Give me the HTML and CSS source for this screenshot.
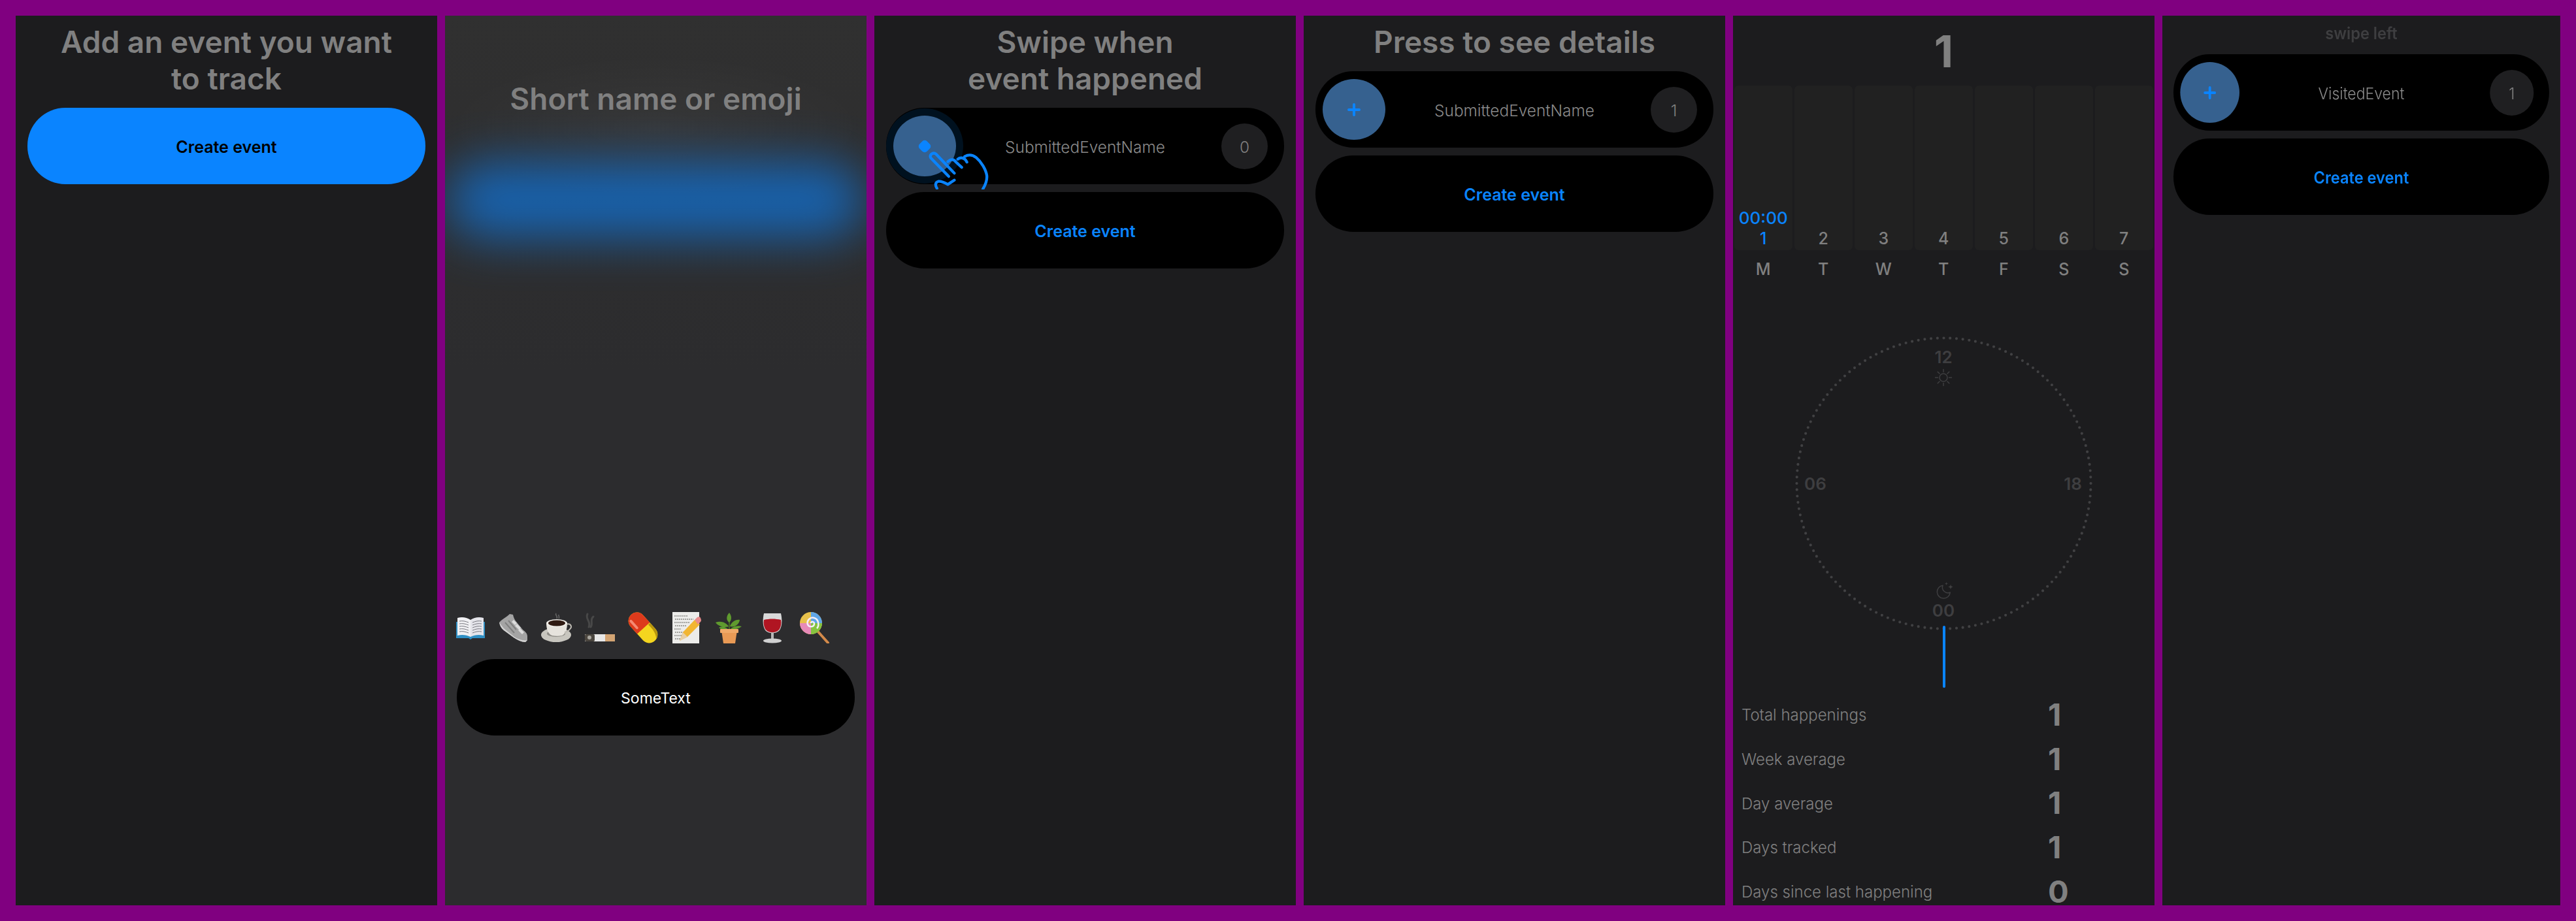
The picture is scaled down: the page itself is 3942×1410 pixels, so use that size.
FILE: index.html
```html
<!DOCTYPE html>
<html>
  <head>
    <meta charset="UTF-8">
    <title>Onboarding screens</title>
    <link rel="stylesheet" href="styles.css">
  </head>
  <body>
    <main class="board">

      <section class="screen">
        <h1 class="title">Add an event you want<br>to track</h1>
        <div class="pill pill-primary">Create event</div>
      </section>

      <section class="screen screen-name">
        <div class="glow"></div>
        <h1 class="title">Short name or emoji</h1>
        <div class="emoji-row">
          <svg class="emoji" viewBox="0 0 48 48">
            <path d="M2 15h44v25H27l-3 2-3-2H2z" fill="#2f8fc4"/>
            <path d="M4 9c7-2 14-1 20 3v26c-6-3-13-4-20-2z" fill="#f1f1f4"/>
            <path d="M44 9c-7-2-14-1-20 3v26c6-3 13-4 20-2z" fill="#e4e4ea"/>
            <path d="M7 14c5-1 9 0 14 2M7 18c5-1 9 0 14 2M7 22c5-1 9 0 14 2M7 26c5-1 9 0 14 2M7 30c5-1 9 0 14 2M41 14c-5-1-9 0-14 2M41 18c-5-1-9 0-14 2M41 22c-5-1-9 0-14 2M41 26c-5-1-9 0-14 2M41 30c-5-1-9 0-14 2" fill="none" stroke="#77777f" stroke-width="1"/>
          </svg>
          <svg class="emoji" viewBox="0 0 48 48">
            <path d="M2 16C6 11 13 8 18 3l5 1c1 5 3 9 6 12l9 11c4 3 7 6 7 10v6l-3 3C36 46 30 43 24 39L9 28C5 25 3 21 2 16z" fill="#a4a4a4"/>
            <path d="M2 16c1 5 3 9 7 12l15 11c6 4 12 7 18 7l3-3c-6 1-14-1-20-5L9 25z" fill="#d2d2d2"/>
            <path d="M24 12l5 5-3 3-5-5zM29 18l6 6-3 3-6-6zM34 25l6 6-3 3-6-6z" fill="#dcdcdc"/>
            <path d="M11 16l14 16M16 13l12 14" stroke="#808080" stroke-width="2" fill="none"/>
          </svg>
          <svg class="emoji" viewBox="0 0 48 48">
            <path d="M23 2c-2 3 3 4 1 8M27 4c-1 2 2 3 0 6" fill="none" stroke="#666" stroke-width="1.5"/>
            <ellipse cx="23" cy="35" rx="23" ry="11" fill="#c8c6bf"/>
            <ellipse cx="23" cy="33" rx="14" ry="5" fill="#8e8c86"/>
            <path d="M8 17h32c0 10-3 17-8 19-5 1-10 1-15 0C11 34 8 26 8 17z" fill="#e6e3dd"/>
            <path d="M38 19c8-3 9 4 7 6-2 3-5 5-9 6" fill="none" stroke="#bdbab3" stroke-width="2"/>
            <ellipse cx="24" cy="17" rx="16" ry="6" fill="#f1efea"/>
            <ellipse cx="24" cy="17" rx="13" ry="4.5" fill="#2f1a12"/>
          </svg>
          <svg class="emoji" viewBox="0 0 48 48">
            <path d="M5 3c-4 8 6 11 2 20M14 7c-6 5 0 10-4 16" fill="none" stroke="#484848" stroke-width="3" stroke-linecap="round"/>
            <rect x="1" y="34" width="46" height="11" rx="1" fill="#e8e8e8"/>
            <rect x="32" y="34" width="15" height="11" rx="1" fill="#d3a473"/>
            <rect x="1" y="34" width="15" height="11" rx="2" fill="#4b463f"/>
            <circle cx="8" cy="39" r="3" fill="#a8a59e"/>
          </svg>
          <svg class="emoji" viewBox="0 0 48 48">
            <g transform="rotate(-42 24 24)">
              <rect x="11" y="-3" width="26" height="54" rx="13" fill="#f4d51f"/>
              <path d="M11 25V10a13 13 0 0 1 26 0v15z" fill="#dd3a1c"/>
              <rect x="15" y="2" width="4" height="18" rx="2" fill="#f58a72"/>
              <path d="M37 26v12a13 13 0 0 1-9 12c5-7 6-15 5-24z" fill="#b8960e"/>
            </g>
          </svg>
          <svg class="emoji" viewBox="0 0 48 48">
            <rect x="3" y="0" width="41" height="48" fill="#ececea"/>
            <path d="M6 6h20M7 11h28M6 16h24M7 21h18M6 26h10M7 31h14M6 36h12M7 41h9" stroke="#55554f" stroke-width="1" stroke-dasharray="2 1" fill="none"/>
            <path d="M14 44 19 31 37 12l8 7-19 19z" fill="#f2b632"/>
            <path d="M37 12l4-4c2-1 4-1 5 1l1 3c0 2-1 3-2 4l-3 3z" fill="#e98b8b"/>
            <path d="M14 44l5-13 7 7z" fill="#e8cfa6"/>
          </svg>
          <svg class="emoji" viewBox="0 0 48 48">
            <path d="M24 28V8" stroke="#4d7a25" stroke-width="1.5"/>
            <path d="M24 16C19 13 19 6 24 1c4 5 4 11 0 15zM23 22C18 24 8 23 3 16c8-3 16 0 20 6zM25 22c2-6 8-11 15-10-1 7-8 12-15 10zM23 27c-5 1-12 0-15-3 5-3 11-1 15 3zM25 27c5 1 13-1 18-5-6-2-14 0-18 5z" fill="#5f9a2e"/>
            <path d="M12 28h24l-3 20H15z" fill="#e99a55"/>
            <rect x="10" y="26" width="28" height="6" rx="1" fill="#f0a968"/>
          </svg>
          <svg class="emoji" viewBox="0 0 48 48">
            <path d="M11 2h26c2 9 2 18-1 24-2 4-6 6-12 6s-10-2-12-6c-3-6-3-15-1-24z" fill="#d9d9d9"/>
            <path d="M11 12c8-2 18-2 26 0 1 5 0 10-2 14-2 3-6 5-11 5s-9-2-11-5c-2-4-3-9-2-14z" fill="#b01522"/>
            <rect x="22" y="31" width="4" height="13" fill="#b8b8b8"/>
            <ellipse cx="24" cy="44" rx="14" ry="3.5" fill="#d0d0d0"/>
          </svg>
          <svg class="emoji" viewBox="0 0 48 48">
            <path d="M26 28l17 19" stroke="#d48a4a" stroke-width="4" stroke-linecap="round"/>
            <circle cx="17" cy="17" r="17" fill="#e7c14b"/>
            <path d="M17 0a17 17 0 0 1 17 17H17z" fill="#5fa6e8"/>
            <path d="M34 17a17 17 0 0 1-17 17V17z" fill="#86c440"/>
            <path d="M17 34A17 17 0 0 1 0 17h17z" fill="#e78ab8"/>
            <path d="M17 17c0-3 5-3 5 1 0 5-8 6-10 1-2-6 4-12 10-10 7 2 8 12 4 16" fill="none" stroke="#f4f0f6" stroke-width="2.5"/>
          </svg>
        </div>
        <div class="pill pill-input">SomeText</div>
      </section>

      <section class="screen">
        <h1 class="title">Swipe when<br>event happened</h1>
        <div class="pill-list">
          <div class="pill event-row">
            <div class="add-btn add-btn-pressed"><span class="press-dot"></span></div>
            <span class="event-name">SubmittedEventName</span>
            <span class="count">0</span>
            <svg class="hand" viewBox="200 200 300 190">
              <path d="M304 330 222 245c-10-14 10-30 24-18l84 88M250 385c-8-12-10-28 6-32 14-3 30 6 44 14l30-20M300 262c10-10 26-16 38 2l26 24M346 250c10-8 26-8 36 4l6 10M378 238c18-10 36-8 52 4 24 20 46 56 50 84 2 20-6 42-18 62" fill="none" stroke="#0a84ff" stroke-width="13" stroke-linecap="round" stroke-linejoin="round"/>
            </svg>
          </div>
          <div class="pill pill-create">Create event</div>
        </div>
      </section>

      <section class="screen">
        <h1 class="title">Press to see details</h1>
        <div class="pill-list">
          <div class="pill event-row">
            <div class="add-btn"><span class="plus"></span></div>
            <span class="event-name">SubmittedEventName</span>
            <span class="count">1</span>
          </div>
          <div class="pill pill-create">Create event</div>
        </div>
      </section>

      <section class="screen">
        <div class="big-count">1</div>
        <div class="week">
          <div class="day-bar"><span class="bar-time">00:00</span><span class="bar-num bar-active">1</span></div>
          <div class="day-bar"><span class="bar-num">2</span></div>
          <div class="day-bar"><span class="bar-num">3</span></div>
          <div class="day-bar"><span class="bar-num">4</span></div>
          <div class="day-bar"><span class="bar-num">5</span></div>
          <div class="day-bar"><span class="bar-num">6</span></div>
          <div class="day-bar"><span class="bar-num">7</span></div>
        </div>
        <div class="week week-days">
          <span>M</span><span>T</span><span>W</span><span>T</span><span>F</span><span>S</span><span>S</span>
        </div>
        <div class="clock">
          <svg class="clock-ring" viewBox="0 0 645 545">
            <ellipse cx="322.5" cy="230" rx="225" ry="222.5" pathLength="144" fill="none" stroke="#414143" stroke-width="4.2" stroke-linecap="round" stroke-dasharray="0 1"/>
          </svg>
          <span class="hour hour-12">12</span>
          <span class="hour hour-06">06</span>
          <span class="hour hour-18">18</span>
          <span class="hour hour-00">00</span>
          <svg class="sun" viewBox="0 0 28 28">
            <circle cx="14" cy="14" r="6" fill="none" stroke="#3e3e40" stroke-width="1.5"/>
            <path d="M14 1.5v4M14 22.5v4M1.5 14h4M22.5 14h4M5.2 5.2l2.8 2.8M20 20l2.8 2.8M5.2 22.800 8 20M20 8l2.8-2.8" stroke="#3e3e40" stroke-width="1.5" stroke-linecap="round"/>
          </svg>
          <svg class="moon" viewBox="0 0 28 26">
            <path d="M11 5.2A10 10 0 1 0 22.3 16 8.5 8.5 0 0 1 11 5.2Z" fill="none" stroke="#3e3e40" stroke-width="1.5" stroke-linejoin="round"/>
            <path d="M23 3.5c.4 2.6 1.4 3.6 4 4-2.6.4-3.6 1.4-4 4-.4-2.600-1.400-3.600-4-4 2.600-.4 3.600-1.400 4-4zM16.500 0c.3 1.700.9 2.300 2.600 2.600-1.700.3-2.300.9-2.600 2.600-.3-1.700-.9-2.300-2.600-2.600 1.700-.3 2.300-.9 2.600-2.600z" fill="#3e3e40"/>
          </svg>
          <span class="clock-hand"></span>
        </div>
        <div class="stats">
          <div class="stat"><span class="stat-label">Total happenings</span><span class="stat-value">1</span></div>
          <div class="stat"><span class="stat-label">Week average</span><span class="stat-value">1</span></div>
          <div class="stat"><span class="stat-label">Day average</span><span class="stat-value">1</span></div>
          <div class="stat"><span class="stat-label">Days tracked</span><span class="stat-value">1</span></div>
          <div class="stat"><span class="stat-label">Days since last happening</span><span class="stat-value">0</span></div>
        </div>
      </section>

      <section class="screen screen-narrow">
        <h2 class="hint">swipe left</h2>
        <div class="pill-list">
          <div class="pill event-row">
            <div class="add-btn"><span class="plus"></span></div>
            <span class="event-name">VisitedEvent</span>
            <span class="count">1</span>
          </div>
          <div class="pill pill-create">Create event</div>
        </div>
      </section>

    </main>
  </body>
</html>
```

FILE: styles.css
```css
* {
    box-sizing: border-box;
}
html, body {
    margin: 0;
    height: 100%;
    overflow: hidden;
    background: #800080;
}
body {
    font-family: Inter, "Noto Sans", sans-serif;
    color: #808080;
}
.board {
    display: flex;
    gap: 12px;
    width: 3942px;
    height: 1410px;
    padding: 24px;
}
.screen {
    position: relative;
    display: flex;
    flex-direction: column;
    flex: none;
    width: 645px;
    height: 1362px;
    background: #1c1c1e;
}
/* last screen is a squeezed copy of the same layout */
.screen-narrow {
    margin-right: -36px;
    transform: scaleX(0.944);
    transform-origin: left top;
}
.title {
    margin: 0;
    padding-top: 12px;
    font-size: 46px;
    line-height: 56px;
    font-weight: 600;
    text-align: center;
}
.hint {
    margin: 0;
    padding-top: 12px;
    font-size: 25px;
    line-height: 30px;
    font-weight: 600;
    color: #3e3e40;
    text-align: center;
}

/* pills */
.pill {
    flex: none;
    height: 117px;
    margin: 17px 18px 0;
    padding-top: 2px;
    border-radius: 58px;
    display: flex;
    align-items: center;
    justify-content: center;
    background: #000;
    font-size: 25px;
    font-weight: 600;
}
.pill-primary {
    background: #0a84ff;
    color: #000;
}
.pill-list {
    display: flex;
    flex-direction: column;
}
.pill-create {
    margin-top: 12px;
    color: #0a84ff;
}
.pill-list .pill:first-child {
    margin-top: 17px;
}
.event-row {
    position: relative;
    display: grid;
    grid-template-columns: 1fr auto 1fr;
    padding-top: 0;
    font-size: 24.4px;
    font-weight: 400;
}
.add-btn {
    width: 96px;
    height: 93px;
    margin-left: 11px;
    border-radius: 50%;
    background: #36618f;
    display: flex;
    align-items: center;
    justify-content: center;
}
.add-btn-pressed {
    box-shadow: 0 0 0 11px #00111f;
}
.plus {
    position: relative;
    width: 20px;
    height: 4px;
    border-radius: 2px;
    background: #0a84ff;
}
.plus::after {
    content: "";
    position: absolute;
    left: 8px;
    top: -8px;
    width: 4px;
    height: 20px;
    border-radius: 2px;
    background: #0a84ff;
}
.press-dot {
    width: 16px;
    height: 16px;
    border-radius: 5px;
    background: #0a84ff;
    transform: rotate(45deg);
}
.event-name {
    padding-top: 2px;
    font-weight: 300;
    color: #8a8a8a;
}
.count {
    justify-self: end;
    width: 71px;
    height: 70px;
    margin-right: 25px;
    padding-top: 2px;
    border-radius: 50%;
    background: #1f1f21;
    display: flex;
    align-items: center;
    justify-content: center;
    font-weight: 300;
}
.hand {
    position: absolute;
    left: 61px;
    top: 62px;
    width: 100px;
    height: 63px;
}

/* name screen */
.screen-name {
    overflow: hidden;
    background: radial-gradient(ellipse 320px 110px at 50% 170px, rgba(255,255,255,0.04), transparent), linear-gradient(#303030, #2c2c2e 40%);
    padding-bottom: 260px;
}
.screen-name .title {
    position: relative;
    padding-top: 99px;
}
.glow {
    position: absolute;
    left: 4px;
    top: 224px;
    width: 637px;
    height: 117px;
    border-radius: 58px;
    background: #0a84ff;
    opacity: 0.6;
    filter: blur(36px);
}
.emoji-row {
    display: flex;
    margin-top: auto;
    padding-left: 6px;
}
.emoji {
    flex: none;
    width: 48px;
    height: 48px;
    margin: 0 9px;
}
.pill-input {
    margin-top: 24px;
    color: #fff;
    font-size: 23px;
    font-weight: 400;
}

/* details screen */
.big-count {
    flex: none;
    height: 107px;
    display: flex;
    align-items: center;
    justify-content: center;
    font-size: 68px;
    font-weight: 700;
}
.week {
    flex: none;
    display: grid;
    grid-template-columns: repeat(7, 88.5px);
    gap: 3.5px;
    padding: 0 2px;
    font-size: 25px;
    font-weight: 500;
    text-align: center;
}
.day-bar {
    height: 252px;
    border-radius: 6px;
    background: #212121;
    display: flex;
    flex-direction: column;
    justify-content: flex-end;
    padding-bottom: 2px;
}
.bar-num {
    line-height: 32px;
}
.bar-active, .bar-time {
    color: #0a84ff;
}
.bar-time {
    line-height: 30px;
    font-size: 26px;
}
.week-days {
    margin-top: 14px;
    line-height: 30px;
}
.clock {
    position: relative;
    flex: none;
    height: 545px;
    margin-top: 83px;
}
.clock-ring {
    display: block;
    width: 645px;
    height: 545px;
}
.hour {
    position: absolute;
    width: 60px;
    margin-left: -30px;
    font-size: 26px;
    line-height: 24px;
    font-weight: 600;
    color: #3e3e40;
    text-align: center;
}
.hour-12 { left: 322px; top: 25px; }
.hour-06 { left: 126px; top: 219px; }
.hour-18 { left: 520px; top: 219px; }
.hour-00 { left: 322px; top: 413px; }
.sun {
    position: absolute;
    left: 308px;
    top: 54px;
    width: 28px;
    height: 28px;
}
.moon {
    position: absolute;
    left: 310px;
    top: 381px;
    width: 28px;
    height: 26px;
}
.clock-hand {
    position: absolute;
    left: 320.5px;
    top: 448px;
    width: 4.5px;
    height: 95px;
    border-radius: 2px;
    background: #0a84ff;
}
.stats {
    margin-top: 5px;
}
.stat {
    display: grid;
    grid-template-columns: 469px 1fr;
    align-items: center;
    height: 67.7px;
    padding-left: 13px;
}
.stat-label {
    padding-top: 2px;
    font-size: 24px;
    font-weight: 300;
}
.stat-value {
    font-size: 47px;
    font-weight: 700;
    line-height: 40px;
}
```
